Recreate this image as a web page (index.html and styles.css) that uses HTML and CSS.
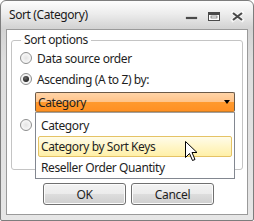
FILE: index.html
```html
<!DOCTYPE html>
<html>
<head>
<meta charset="utf-8">
<link rel="stylesheet" href="styles.css">
</head>
<body>
<div class="window">
  <div class="titlebar">
    <span class="title">Sort (Category)</span>
    <svg class="caption" width="62" height="28" viewBox="0 0 62 28">
      <rect x="2.5" y="15.5" width="12" height="3" fill="#4a4a4a" stroke="#fff" stroke-opacity="0.6" stroke-width="1"/>
      <rect x="25.5" y="11.5" width="11" height="8" fill="#fff" stroke="#4a4a4a" stroke-width="1"/>
      <rect x="26" y="12" width="10" height="2" fill="#4a4a4a"/>
      <rect x="28" y="15" width="6" height="2" fill="#fff" stroke="#4a4a4a" stroke-width="0.6"/>
      <path d="M50 12 L59 19 M59 12 L50 19" stroke="#fff" stroke-width="4" stroke-linecap="square" opacity="0.7"/>
      <path d="M50 12 L59 19 M59 12 L50 19" stroke="#4a4a4a" stroke-width="2.2"/>
    </svg>
  </div>
  <div class="client">
    <fieldset class="group">
      <legend>Sort options</legend>
      <label class="radio"><span class="dot"></span>Data source order</label>
      <label class="radio"><span class="dot on"></span>Ascending (A to Z) by:</label>
      <div class="combo-wrap">
        <div class="combo active"><span>Category</span><span class="arrow"></span></div>
        <ul class="dropdown">
          <li class="item">Category</li>
          <li class="item hover">Category by Sort Keys</li>
          <li class="item">Reseller Order Quantity</li>
        </ul>
      </div>
      <label class="radio"><span class="dot"></span></label>
      <div class="combo"><span></span><span class="arrow"></span></div>
    </fieldset>
    <div class="buttons">
      <button class="btn">OK</button>
      <button class="btn">Cancel</button>
    </div>
    <svg class="cursor" width="14" height="21" viewBox="0 0 14 21">
      <path d="M0.5 0.5 L0.5 16.5 L4.5 12.5 L7.5 19.5 L10 18.5 L7 11.5 L12 11.5 Z" fill="#fff" stroke="#000" stroke-width="1" stroke-linejoin="miter"/>
    </svg>
  </div>
</div>
</body>
</html>
```
FILE: styles.css
```css
* { box-sizing: border-box; }
html, body { margin: 0; padding: 0; background: #fff; }
body { font-family: "Noto Sans", "Open Sans", sans-serif; font-size: 12px; letter-spacing: -0.4px; color: #1e1e1e; }

.window {
  width: 254px;
  height: 221px;
  border: 1px solid #7d7d7d;
  border-radius: 6px 6px 2px 2px;
  background: linear-gradient(to bottom, #fdfdfd 0, #ececec 13px, #d3d3d3 27px, #dedede 60px, #e6e6e6 100%);
  display: flex;
  flex-direction: column;
  position: relative;
}

.titlebar {
  height: 28px;
  display: flex;
  align-items: center;
  justify-content: space-between;
  padding-left: 8px;
}
.title { font-size: 12px; color: #1a1a1a; line-height: 16px; margin-top: -1px; }
.caption { display: block; margin-right: 8px; align-self: flex-start; }

.client {
  flex: 1;
  margin: 0 5px 5px 5px;
  border: 1px solid #9a9a9a;
  background: #fff;
  position: relative;
  padding-top: 2px;
}

.group {
  margin: 0 4px;
  border: 1px solid #c4c4c4;
  border-radius: 3px;
  padding: 0 7px 11px 7px;
  min-width: 0;
}
.group legend {
  padding: 0 3px;
  margin-left: 2px;
  line-height: 16px;
  color: #1e1e1e;
}

.radio {
  display: flex;
  align-items: center;
  height: 20px;
  margin-bottom: 1px;
}
.dot {
  width: 12px;
  height: 12px;
  border-radius: 50%;
  border: 1px solid #8e8f8f;
  background: radial-gradient(circle at 50% 50%, #e4e4e4 0, #f4f4f4 55%, #fafafa 100%);
  margin: 0 5px 0 1px;
  position: relative;
  flex: none;
}
.dot.on::after {
  content: "";
  position: absolute;
  left: 2px; top: 2px;
  width: 6px; height: 6px;
  border-radius: 50%;
  background: radial-gradient(circle at 40% 35%, #6a6a6a 0, #1a1a1a 80%);
}

.combo-wrap { position: relative; margin: 3px 0 3px 16px; }
.combo {
  height: 20px;
  margin-left: 16px;
  border: 1px solid #9a9a9a;
  border-radius: 2px;
  display: flex;
  align-items: center;
  justify-content: space-between;
  padding: 0 4px 0 2px;
  background: linear-gradient(to bottom, #f5f5f5 0, #ebebeb 50%, #dddddd 50%, #cfcfcf 100%);
  margin-top: 3px;
}
.combo-wrap .combo { margin: 0; }
.combo.active {
  border-color: #6b5a48;
  border-bottom-color: #c47b2a;
  background: linear-gradient(to bottom, #ffd4a8 0, #ffc48a 48%, #ff9a2e 50%, #ff9023 100%);
}
.arrow {
  width: 0; height: 0;
  border-left: 3px solid transparent;
  border-right: 3px solid transparent;
  border-top: 4px solid #000;
}

.dropdown {
  position: absolute;
  left: 0; right: 0;
  top: 20px;
  margin: 0;
  padding: 2px 2px 0 2px;
  list-style: none;
  background: #fff;
  border: 1px solid #828790;
  border-top-color: #a0a0a0;
  z-index: 2;
  height: 67px;
}
.item {
  height: 21px;
  line-height: 19px;
  padding-left: 2px;
  border: 1px solid transparent;
  color: #1e1e1e;
}
.item.hover {
  border-color: #e5c365;
  border-radius: 2px;
  background: linear-gradient(to bottom, #fffcea 0, #fff6c8 50%, #fff0a8 100%);
}

.buttons {
  display: flex;
  gap: 5px;
  padding-left: 36px;
  margin-top: 13px;
}
.btn {
  width: 83px;
  height: 22px;
  border: 1px solid #707070;
  border-radius: 3px;
  font-family: inherit;
  font-size: 12px;
  letter-spacing: -0.3px;
  color: #1e1e1e;
  padding: 0;
  background: linear-gradient(to bottom, #f3f3f3 0, #ebebeb 50%, #dddddd 50%, #cfcfcf 100%);
  box-shadow: inset 0 0 0 1px #fcfcfc;
}

.cursor {
  position: absolute;
  left: 178px;
  top: 111px;
  z-index: 3;
}
```
